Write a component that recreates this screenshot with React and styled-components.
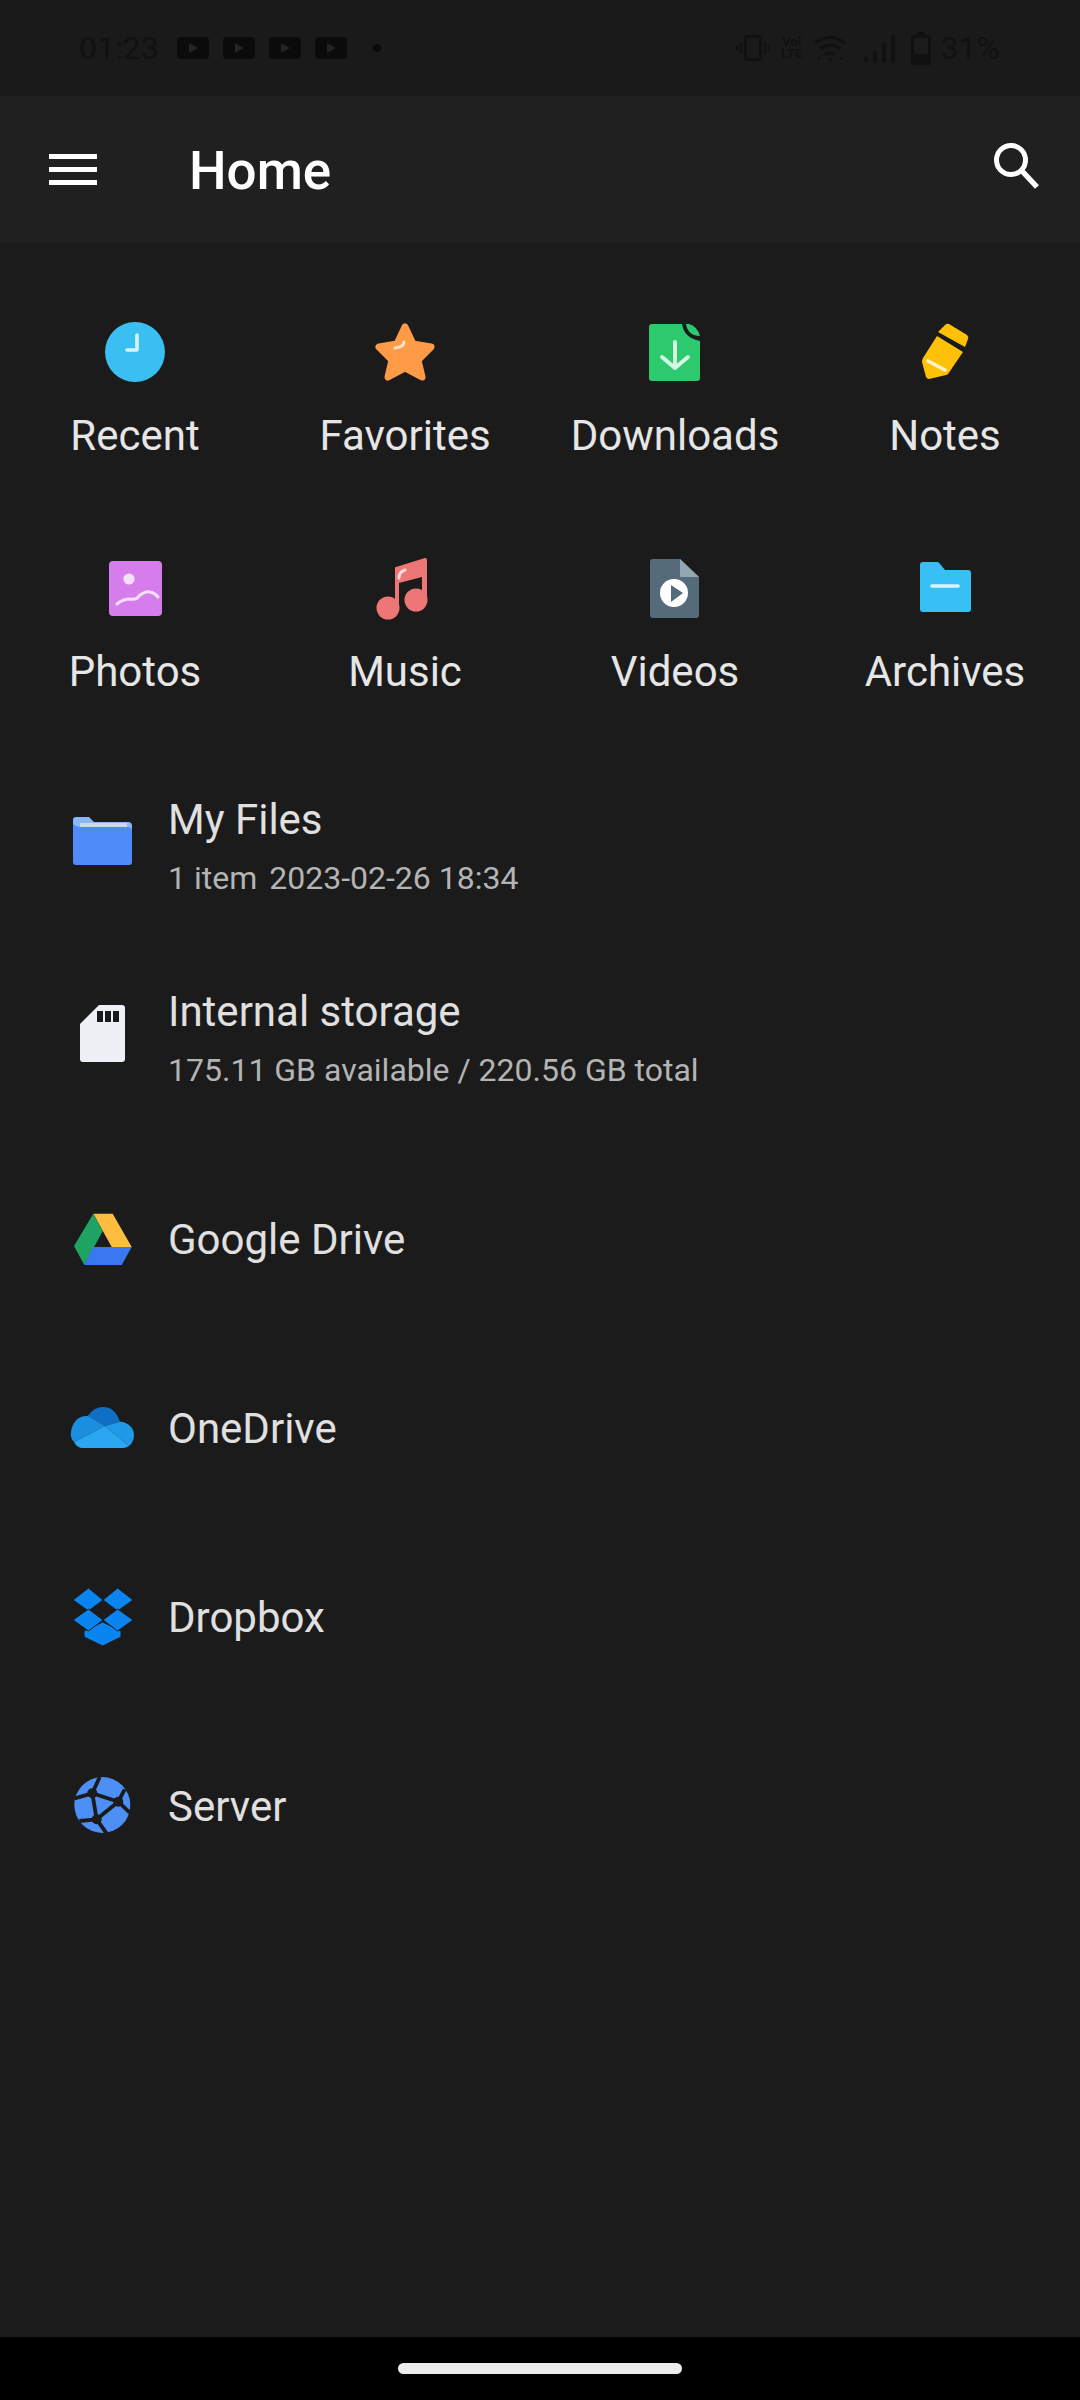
import React from 'react'
import styled, { createGlobalStyle } from 'styled-components'

const GlobalStyle = createGlobalStyle`
  * { box-sizing: border-box; }
  html, body { margin: 0; padding: 0; background: #1b1b1b; }
  body { font-family: Roboto, "Liberation Sans", sans-serif; }
`

const bg = '#1b1b1b'
const ink = '#111111'

const Icon = ({ children }) => <IconSvg viewBox="0 0 72 72">{children}</IconSvg>

const RecentIcon = () => (
  <Icon>
    <circle cx="36" cy="36" r="30" fill="#39bff2" />
    <path d="M38 19V34H28" fill="none" stroke="#d9f4ff" strokeWidth="3.6" strokeLinecap="round" strokeLinejoin="round" />
  </Icon>
)

const FavoritesIcon = () => (
  <Icon>
    <path d="M36 11L44 28L62 31L49 44L53 61L36 52L19 61L23 44L10 31L28 28Z" fill="#ff9a47" stroke="#ff9a47" strokeWidth="7" strokeLinejoin="round" />
    <path d="M35 26Q35 31 26 32" fill="none" stroke="#ffe3cb" strokeWidth="3" strokeLinecap="round" />
  </Icon>
)

const DownloadsIcon = () => (
  <Icon>
    <path d="M13 8H43Q45 22 61 25V62Q61 65 58 65H13Q10 65 10 62V11Q10 8 13 8Z" fill="#2dc96f" />
    <path d="M47 8H50Q58 10 61 20Q49 20 47 8Z" fill="#2dc96f" />
    <path d="M36 26V51M23 41L36 52L49 41" fill="none" stroke="#d5f6e2" strokeWidth="4" strokeLinecap="round" strokeLinejoin="round" />
  </Icon>
)

const NotesIcon = () => (
  <Icon>
    <path d="M36 9Q38 7 40 8L58 19Q60 21 59 23L56 31L29 16Z" fill="#ffc107" />
    <path d="M28 20L54 36L39 58Q38 59 37 59L20 63Q18 63 17 61L13 46Q13 44 14 42Z" fill="#ffc107" />
    <path d="M19 45L36 54" fill="none" stroke="#fff4cf" strokeWidth="3.6" strokeLinecap="round" />
  </Icon>
)

const PhotosIcon = () => (
  <Icon>
    <rect x="10" y="9" width="53" height="55" rx="4" fill="#d57dea" />
    <circle cx="30" cy="27" r="5.6" fill="#f6dffb" />
    <path d="M18 52Q24 47 31 47Q38 48 40 44Q46 39 51 40Q56 41 59 45" fill="none" stroke="#f6dffb" strokeWidth="3" strokeLinecap="round" />
  </Icon>
)

const MusicIcon = () => (
  <Icon>
    <path d="M26 16Q26 15 27 15L56 6Q58 6 58 8V48H53V25L30 31V56H26Z" fill="#ee7676" />
    <circle cx="19" cy="56" r="11.5" fill="#ee7676" />
    <circle cx="47" cy="48" r="11.5" fill="#ee7676" />
    <path d="M30 26Q30 20 36 18" fill="none" stroke="#fbdcdc" strokeWidth="3" strokeLinecap="round" />
  </Icon>
)

const VideosIcon = () => (
  <Icon>
    <path d="M14 7H41L60 25V63Q60 66 57 66H14Q11 66 11 63V10Q11 7 14 7Z" fill="#566b79" />
    <path d="M41 7L60 25H41Z" fill="#93a7b3" />
    <circle cx="35" cy="41" r="14" fill="#ffffff" />
    <path d="M32 33L44 41L32 50Z" fill="#566b79" />
  </Icon>
)

const ArchivesIcon = () => (
  <Icon>
    <path d="M14 10H28Q30 10 31 12L36 18H59Q62 18 62 21V57Q62 60 59 60H14Q11 60 11 57V13Q11 10 14 10Z" fill="#38c0f5" />
    <path d="M23 34H49" fill="none" stroke="#d8f4ff" strokeWidth="3.6" strokeLinecap="round" />
  </Icon>
)

const MyFilesIcon = () => (
  <Icon>
    <path d="M10 12H23L28 17H62Q66 17 66 21V34H7V15Q7 12 10 12Z" fill="#8cb6fa" />
    <path d="M14 18H61V26H14Z" fill="#cfd8e6" />
    <path d="M7 19Q10 22 14 22H62Q66 22 66 26V57Q66 60 63 60H10Q7 60 7 57Z" fill="#4f8bf9" />
  </Icon>
)

const StorageIcon = () => (
  <Icon>
    <path d="M33 8H56Q59 8 59 11V62Q59 65 56 65H17Q14 65 14 62V27Z" fill="#edf1f5" />
    <rect x="31" y="14" width="6" height="11" fill={bg} />
    <rect x="39" y="14" width="6" height="11" fill={bg} />
    <rect x="47" y="14" width="6" height="11" fill={bg} />
  </Icon>
)

const DriveIcon = () => (
  <Icon>
    <path d="M27.3 10.7H46.7L65.7 44H45.7Z" fill="#fdbd3e" />
    <path d="M27.3 10.7L36.7 28L18.3 62L8 43Z" fill="#1ea362" />
    <path d="M27.3 44H65.7L55.7 62H18.3Z" fill="#3a78f2" />
  </Icon>
)

const OneDriveIcon = () => (
  <Icon>
    <path d="M21.7 24Q28 15 37.3 15Q49 15 54 29.7L39 34Z" fill="#0f6fc5" />
    <path d="M22 24C13 23 6 30 5 40Q4 46 8 50L39 34Z" fill="#1a8fe0" />
    <path d="M54 29.7C62 30 68 36 68 43Q68 50 63 54L39 34Z" fill="#1e9ae8" />
    <path d="M8 50L39 34L63 54Q60 56 57 56H17Q11 56 8 50Z" fill="#2aa7f0" />
  </Icon>
)

const DropboxIcon = () => (
  <Icon>
    <g fill="#0a84ee" stroke={bg} strokeWidth="1" strokeLinejoin="round">
      <path d="M18 50L36.7 41L55 50V56L36.7 65L18 56Z" />
      <path d="M7 19L22.5 7L37 19L22.5 30Z" />
      <path d="M37 19L51.7 7L67 19L51.7 30Z" />
      <path d="M7 39L22.5 28L37 39L22.5 50Z" />
      <path d="M37 39L51.7 28L67 39L51.7 50Z" />
    </g>
  </Icon>
)

const ServerIcon = () => (
  <Icon>
    <circle cx="36.3" cy="35" r="28" fill="#4d8ff5" />
    <path d="M26.3 23.3L52.3 31.7L30.7 49.3ZM26.3 23.3L33.7 7M26.3 23.3L8.7 28.3M52.3 31.7L63.7 42.7M52.3 31.7L58.7 19.3M30.7 49.3L13.3 51M30.7 49.3L40.7 63.7" fill="none" stroke={bg} strokeWidth="3.8" />
    <circle cx="26.3" cy="23.3" r="5" fill={bg} />
    <circle cx="52.3" cy="31.7" r="5" fill={bg} />
    <circle cx="30.7" cy="49.3" r="5" fill={bg} />
  </Icon>
)

const SearchIcon = () => (
  <SearchSvg viewBox="0 0 46 47">
    <circle cx="17" cy="17" r="14.5" fill="none" stroke="#fff" strokeWidth="5" />
    <path d="M28 28L43 44" fill="none" stroke="#fff" strokeWidth="5.4" />
  </SearchSvg>
)

const VideoNotice = () => (
  <NoticeSvg viewBox="0 0 32 22">
    <rect width="32" height="22" rx="4" fill="#0b0b0b" />
    <path d="M12 6L21 11L12 16Z" fill="#242424" />
  </NoticeSvg>
)

const VibrateIcon = () => (
  <StatusSvg width="34" height="26" viewBox="0 0 34 26">
    <rect x="9.5" y="1.5" width="15" height="23" rx="2" fill="none" stroke={ink} strokeWidth="3" />
    <path d="M5 7V19M1 10V16M29 7V19M33 10V16" fill="none" stroke={ink} strokeWidth="2.4" />
  </StatusSvg>
)

const WifiIcon = () => (
  <StatusSvg width="32" height="27" viewBox="0 0 32 27">
    <path d="M1 8Q16 -3 31 8M6 14Q16 6 26 14M11 20Q16 15 21 20" fill="none" stroke={ink} strokeWidth="3" />
    <path d="M16 27L13 23H19Z" fill={ink} />
    <path d="M3 22L7 22L5 26ZM25 22L29 22L27 26Z" fill={ink} />
  </StatusSvg>
)

const SignalIcon = () => (
  <StatusSvg width="31" height="27" viewBox="0 0 31 27">
    <rect x="0" y="22" width="4" height="5" fill={ink} />
    <rect x="9" y="16" width="4" height="11" fill={ink} />
    <rect x="18" y="8" width="4" height="19" fill={ink} />
    <rect x="27" y="0" width="4" height="27" fill={ink} />
  </StatusSvg>
)

const BatteryIcon = () => (
  <StatusSvg width="20" height="33" viewBox="0 0 20 33">
    <path d="M6 0H14V3H18Q20 3 20 5V33H0V5Q0 3 2 3H6Z" fill={ink} />
    <rect x="3" y="6" width="14" height="16" fill="#1b1b1b" />
  </StatusSvg>
)

const shortcuts = [
  { label: 'Recent', icon: <RecentIcon /> },
  { label: 'Favorites', icon: <FavoritesIcon /> },
  { label: 'Downloads', icon: <DownloadsIcon /> },
  { label: 'Notes', icon: <NotesIcon /> },
  { label: 'Photos', icon: <PhotosIcon /> },
  { label: 'Music', icon: <MusicIcon /> },
  { label: 'Videos', icon: <VideosIcon /> },
  { label: 'Archives', icon: <ArchivesIcon /> },
]

const clouds = [
  { label: 'Google Drive', icon: <DriveIcon /> },
  { label: 'OneDrive', icon: <OneDriveIcon /> },
  { label: 'Dropbox', icon: <DropboxIcon /> },
  { label: 'Server', icon: <ServerIcon /> },
]

function App() {
  return (
    <Page>
      <GlobalStyle />
      <StatusBar>
        <StatusLeft>
          <StatusText>01:23</StatusText>
          <Notices>
            <VideoNotice />
            <VideoNotice />
            <VideoNotice />
            <VideoNotice />
          </Notices>
          <Dot />
        </StatusLeft>
        <StatusRight>
          <VibrateIcon />
          <Volte>Vol<br />LTE</Volte>
          <WifiIcon />
          <SignalIcon />
          <BatteryIcon />
          <StatusText>31%</StatusText>
        </StatusRight>
      </StatusBar>

      <Toolbar>
        <Menu>
          <span />
          <span />
          <span />
        </Menu>
        <Title>Home</Title>
        <SearchIcon />
      </Toolbar>

      <Main>
        <Shortcuts>
          {shortcuts.map((s) => (
            <Shortcut key={s.label}>
              {s.icon}
              <ShortcutLabel>{s.label}</ShortcutLabel>
            </Shortcut>
          ))}
        </Shortcuts>

        <List>
          <Row $tall>
            <MyFilesIcon />
            <RowText>
              <RowTitle>My Files</RowTitle>
              <RowSub>
                <span>1 item</span>
                <span>2023-02-26 18:34</span>
              </RowSub>
            </RowText>
          </Row>
          <Row $tall>
            <StorageIcon />
            <RowText>
              <RowTitle>Internal storage</RowTitle>
              <RowSub>175.11 GB available / 220.56 GB total</RowSub>
            </RowText>
          </Row>
        </List>

        <CloudList>
          {clouds.map((c) => (
            <Row key={c.label}>
              {c.icon}
              <RowTitle>{c.label}</RowTitle>
            </Row>
          ))}
        </CloudList>
      </Main>

      <NavBar>
        <Handle />
      </NavBar>
    </Page>
  )
}

const Page = styled.div`
  width: 1080px;
  min-height: 2400px;
  display: flex;
  flex-direction: column;
  background: #1b1b1b;
`

const StatusBar = styled.div`
  height: 96px;
  flex: none;
  padding: 0 80px 0 79px;
  display: flex;
  align-items: center;
  justify-content: space-between;
  background: #1a1a1a;
`

const StatusLeft = styled.div`
  display: flex;
  align-items: center;
`

const StatusRight = styled.div`
  display: flex;
  align-items: center;
  gap: 10px;

  & > :nth-child(4) { margin-left: 8px; }
  & > :nth-child(5) { margin-left: 6px; }
`

const StatusText = styled.span`
  font-size: 32px;
  line-height: 40px;
  color: ${ink};
`

const Notices = styled.div`
  display: flex;
  gap: 14px;
  margin-left: 18px;
`

const NoticeSvg = styled.svg`
  width: 32px;
  height: 22px;
  display: block;
`

const Dot = styled.i`
  width: 8px;
  height: 8px;
  margin-left: 26px;
  border-radius: 50%;
  background: #0b0b0b;
`

const StatusSvg = styled.svg`
  display: block;
  flex: none;
`

const Volte = styled.span`
  width: 24px;
  font-size: 13px;
  line-height: 12px;
  font-weight: 700;
  text-align: center;
  color: ${ink};
`

const Toolbar = styled.header`
  height: 146px;
  flex: none;
  padding: 0 40px 0 49px;
  display: flex;
  align-items: center;
  background: #202020;
`

const Menu = styled.div`
  width: 48px;
  display: flex;
  flex-direction: column;
  gap: 8px;

  span {
    height: 5px;
    background: #fff;
  }
`

const Title = styled.h1`
  flex: 1;
  margin: 3px 0 0 92px;
  font-size: 53px;
  line-height: 60px;
  font-weight: 500;
  color: #fff;
`

const SearchSvg = styled.svg`
  width: 46px;
  height: 47px;
  margin-top: -6px;
  display: block;
`

const Main = styled.main`
  flex: 1;
`

const IconSvg = styled.svg`
  width: 72px;
  height: 72px;
  flex: none;
  display: block;
`

const Shortcuts = styled.section`
  padding-top: 74px;
  display: grid;
  grid-template-columns: repeat(4, 270px);
  row-gap: 92px;
`

const Shortcut = styled.div`
  display: flex;
  flex-direction: column;
  align-items: center;
  gap: 24px;
`

const ShortcutLabel = styled.span`
  font-size: 42px;
  line-height: 48px;
  color: #e6e6e6;
`

const List = styled.section`
  margin-top: 54px;
`

const CloudList = styled.section`
  margin-top: 10px;
`

const Row = styled.div`
  height: ${(p) => (p.$tall ? '192px' : '189px')};
  padding-left: 66px;
  display: flex;
  align-items: center;
  gap: 30px;

  svg {
    margin-bottom: ${(p) => (p.$tall ? '10px' : '0')};
  }
`

const RowText = styled.div`
  display: flex;
  flex-direction: column;
  gap: 14px;
`

const RowTitle = styled.span`
  padding-top: 2px;
  font-size: 42px;
  line-height: 48px;
  color: #e0e0e0;
`

const RowSub = styled.span`
  display: flex;
  gap: 12px;
  font-size: 32px;
  line-height: 40px;
  color: #b4b4b4;
`

const NavBar = styled.footer`
  height: 63px;
  flex: none;
  display: flex;
  justify-content: center;
  padding-top: 26px;
  background: #000;
`

const Handle = styled.div`
  width: 284px;
  height: 11px;
  border-radius: 6px;
  background: #ececec;
`

export default App
